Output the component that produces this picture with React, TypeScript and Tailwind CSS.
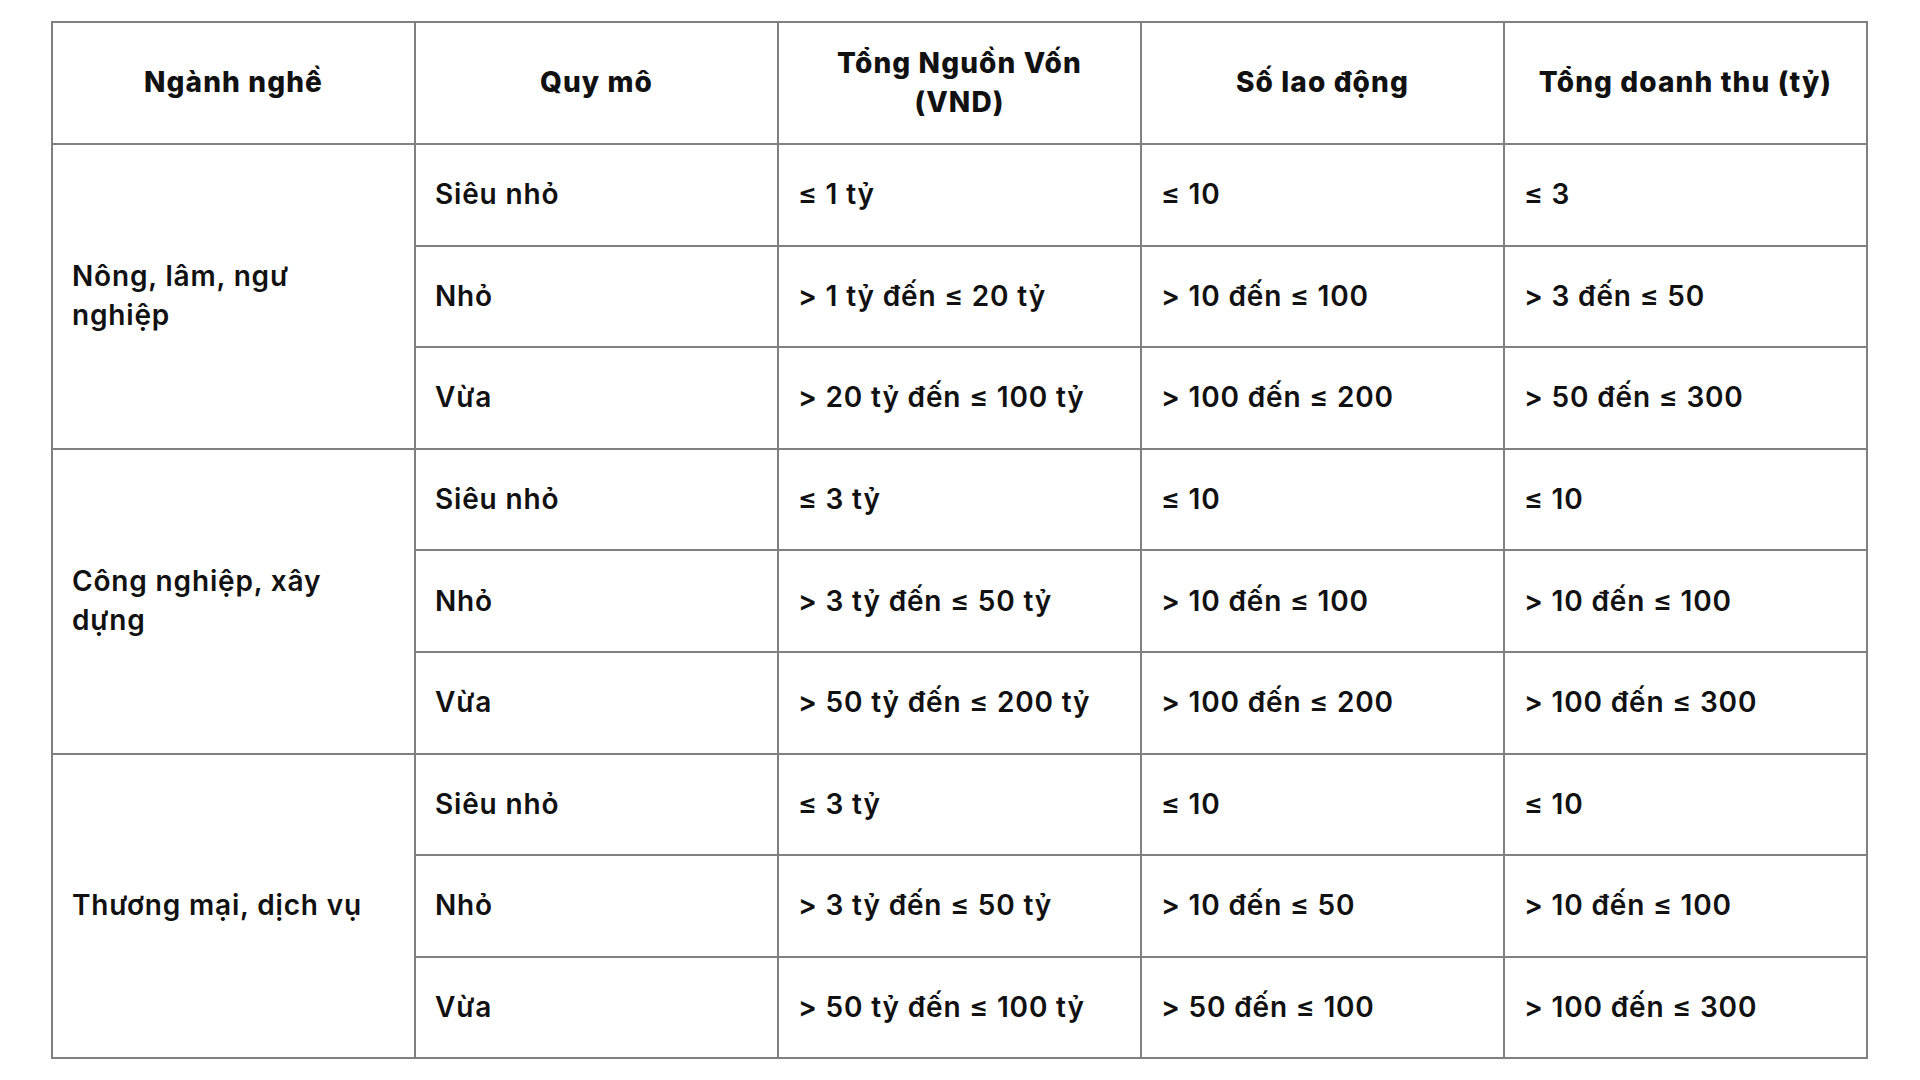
const headers = ["Ngành nghề", "Quy mô", "Tổng Nguồn Vốn\n(VND)", "Số lao động", "Tổng doanh thu (tỷ)"];

type Row = { scale: string; capital: string; labor: string; revenue: string };
type Group = { sector: string; rows: Row[] };

const groups: Group[] = [
  {
    sector: "Nông, lâm, ngư\nnghiệp",
    rows: [
      { scale: "Siêu nhỏ", capital: "≤ 1 tỷ", labor: "≤ 10", revenue: "≤ 3" },
      { scale: "Nhỏ", capital: "> 1 tỷ đến ≤ 20 tỷ", labor: "> 10 đến ≤ 100", revenue: "> 3 đến ≤ 50" },
      { scale: "Vừa", capital: "> 20 tỷ đến ≤ 100 tỷ", labor: "> 100 đến ≤ 200", revenue: "> 50 đến ≤ 300" },
    ],
  },
  {
    sector: "Công nghiệp, xây\ndựng",
    rows: [
      { scale: "Siêu nhỏ", capital: "≤ 3 tỷ", labor: "≤ 10", revenue: "≤ 10" },
      { scale: "Nhỏ", capital: "> 3 tỷ đến ≤ 50 tỷ", labor: "> 10 đến ≤ 100", revenue: "> 10 đến ≤ 100" },
      { scale: "Vừa", capital: "> 50 tỷ đến ≤ 200 tỷ", labor: "> 100 đến ≤ 200", revenue: "> 100 đến ≤ 300" },
    ],
  },
  {
    sector: "Thương mại, dịch vụ",
    rows: [
      { scale: "Siêu nhỏ", capital: "≤ 3 tỷ", labor: "≤ 10", revenue: "≤ 10" },
      { scale: "Nhỏ", capital: "> 3 tỷ đến ≤ 50 tỷ", labor: "> 10 đến ≤ 50", revenue: "> 10 đến ≤ 100" },
      { scale: "Vừa", capital: "> 50 tỷ đến ≤ 100 tỷ", labor: "> 50 đến ≤ 100", revenue: "> 100 đến ≤ 300" },
    ],
  },
];

const cell = "border-2 border-[#808080] pl-[19px] pr-5 align-middle text-left";

export default function App() {
  return (
    <div
      className="min-h-screen bg-white pl-[51px] pt-[21px] text-[28px] leading-[1.4] tracking-[0.04em] text-[#111]"
      style={{ fontFamily: "Inter, 'Noto Sans', sans-serif" }}
    >
      <table className="w-[1817px] table-fixed border-collapse">
        <thead>
          <tr className="h-[122px]">
            {headers.map((h) => (
              <th key={h} className="whitespace-pre-line border-2 border-[#808080] px-5 text-center align-middle font-extrabold">
                {h}
              </th>
            ))}
          </tr>
        </thead>
        <tbody className="font-semibold tracking-[0.03em]">
          {groups.map((g) =>
            g.rows.map((r, i) => (
              <tr key={g.sector + r.scale} className="h-[101.6px]">
                {i === 0 && (
                  <td rowSpan={g.rows.length} className={`${cell} whitespace-pre-line`}>
                    {g.sector}
                  </td>
                )}
                <td className={cell}>{r.scale}</td>
                <td className={cell}>{r.capital}</td>
                <td className={cell}>{r.labor}</td>
                <td className={cell}>{r.revenue}</td>
              </tr>
            ))
          )}
        </tbody>
      </table>
    </div>
  );
}
